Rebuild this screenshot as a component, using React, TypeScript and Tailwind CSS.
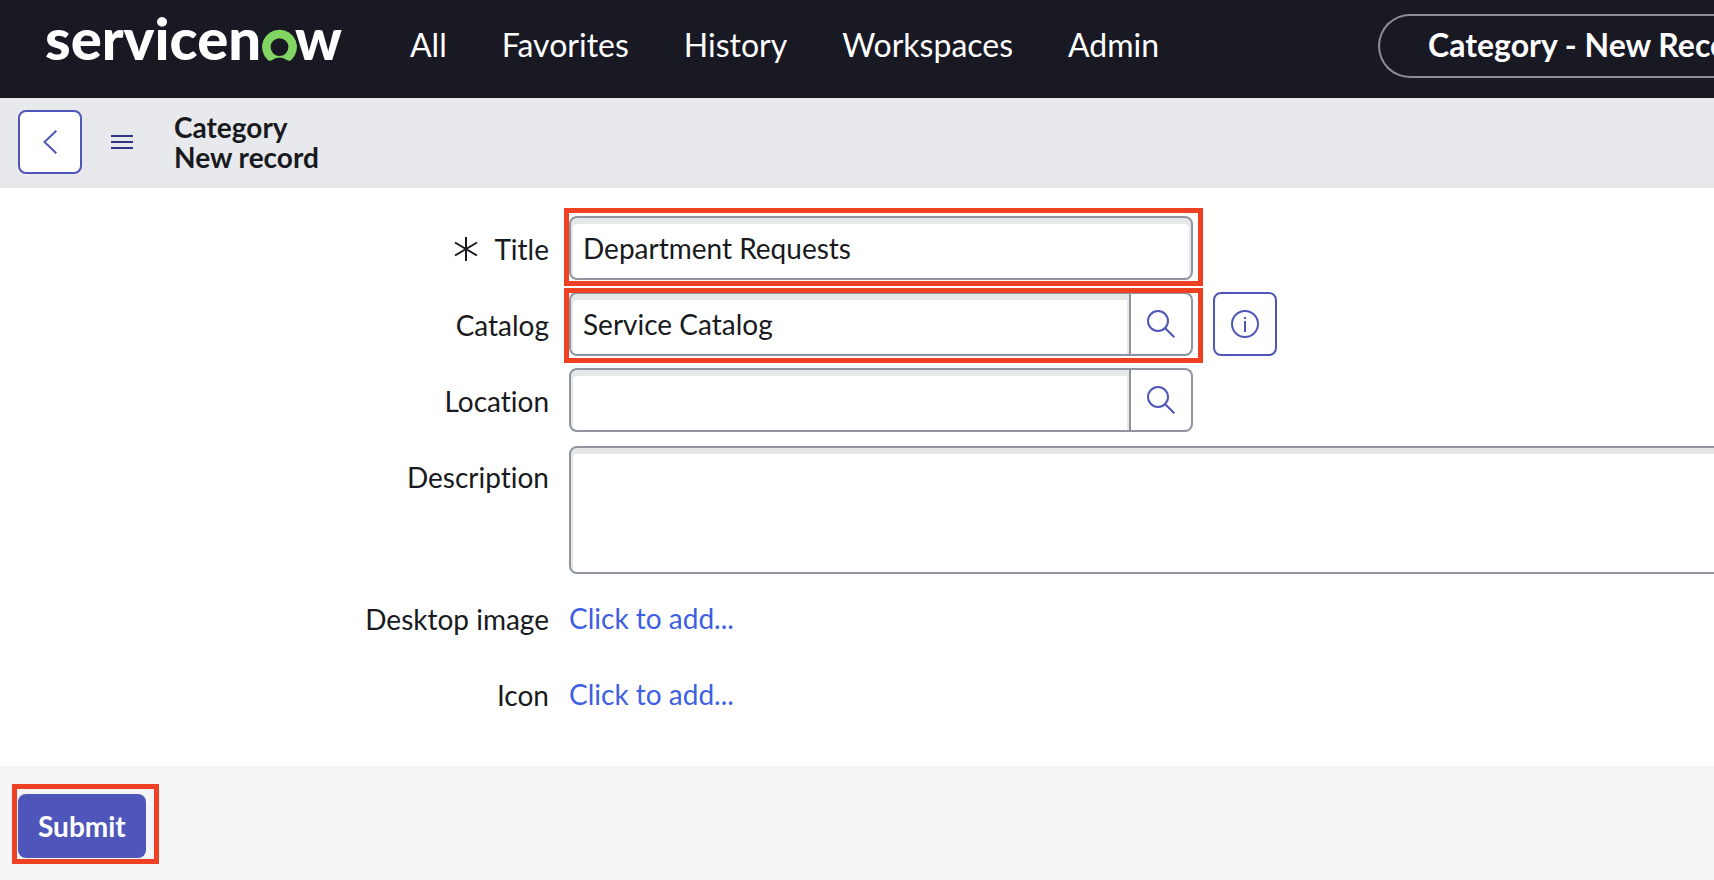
import type { ReactNode } from "react";

const NAV_ITEMS = ["All", "Favorites", "History", "Workspaces", "Admin"];

const FIELD =
  "border-2 border-[#9094a0] bg-white shadow-[inset_0_4px_0_2px_#e6e8e8] outline-none px-3 leading-10";

function Logo() {
  return (
    <a href="#" aria-label="servicenow" className="flex w-[300px] shrink-0">
      <svg viewBox="0 0 300 80" className="h-20 w-[300px]" aria-hidden="true">
        <text x="-1" y="60" fill="#fff" fontFamily="Lato, sans-serif" fontWeight="900" fontSize="58">
          servicen
        </text>
        <path
          fill="#81d663"
          d="M233.500 29.700a17.300 17.300 0 0 0-11.700 30.200c1.200 1.100 3 1.200 4.300.2a12 12 0 0 1 14.800 0c1.300 1 3.100.9 4.300-.2a17.300 17.300 0 0 0-11.700-30.200zM233.500 56a8.900 8.900 0 1 1 0-17.800 8.900 8.900 0 0 1 0 17.800z"
        />
        <text x="249" y="60" fill="#fff" fontFamily="Lato, sans-serif" fontWeight="900" fontSize="58">
          w
        </text>
      </svg>
    </a>
  );
}

function SearchIcon() {
  return (
    <svg viewBox="0 0 28 28" className="size-7" fill="none" stroke="#4f56ba" strokeWidth="2">
      <circle cx="11" cy="11" r="10" />
      <path d="M18 18l9.300 9.300" />
    </svg>
  );
}

function Highlight({ className }: { className: string }) {
  return <span aria-hidden="true" className={`pointer-events-none absolute border-[5px] border-[#ee4023] ${className}`} />;
}

function Row({ id, label, required, children }: { id: string; label: string; required?: boolean; children: ReactNode }) {
  return (
    <div className="flex gap-5">
      <label htmlFor={id} className="flex h-16 w-[549px] shrink-0 items-center justify-end gap-4 pt-[2px]">
        {required && (
          <svg viewBox="0 0 24 24" className="size-6" stroke="#181a20" strokeWidth="2" aria-hidden="true">
            <path d="M12 0v24M1 5.500l22 13M23 5.500l-22 13" />
          </svg>
        )}
        {label}
      </label>
      {children}
    </div>
  );
}

function Lookup({ id, label, value }: { id: string; label: string; value: string }) {
  return (
    <div className="flex h-16 w-[624px]">
      <input id={id} defaultValue={value} className={`${FIELD} min-w-0 flex-1 rounded-l-lg`} />
      <button
        type="button"
        aria-label={`Look up ${label}`}
        className="flex w-[62px] items-center justify-center rounded-r-lg border-2 border-l-0 border-[#9094a0] bg-white"
      >
        <SearchIcon />
      </button>
    </div>
  );
}

export default function App() {
  return (
    <div className="flex min-h-screen flex-col overflow-x-hidden bg-[#f5f5f8] font-['Lato',sans-serif] text-[28px] leading-[30px] text-[#181a20] [font-variant-ligatures:none]">
      <header className="flex h-[98px] items-start overflow-hidden bg-[#191924] pl-[46px] text-[32px] leading-10 text-white">
        <Logo />
        <nav className="mt-[13px] ml-16 flex h-16 shrink-0 items-center gap-[55px]">
          {NAV_ITEMS.map((item) => (
            <a key={item} href="#">
              {item}
            </a>
          ))}
        </nav>
        <div className="mt-[14px] ml-auto flex h-16 w-[336px] shrink-0 items-center rounded-l-full border-2 border-r-0 border-[#8e8d9b] pb-[2px] pl-12 font-bold whitespace-nowrap">
          Category - New Record
        </div>
      </header>

      <div className="flex h-[90px] items-center border-b-2 border-[#e4e4e9] bg-[#e8e9ed] pl-[18px]">
        <button
          type="button"
          aria-label="Back"
          className="flex size-16 items-center justify-center rounded-lg border-2 border-[#4f56ba] bg-white"
        >
          <svg viewBox="0 0 14 24" className="h-6 w-[14px]" fill="none" stroke="#4f56ba" strokeWidth="2">
            <path d="M13.300.7L1.500 12l11.800 11.300" />
          </svg>
        </button>
        <button type="button" aria-label="Menu" className="ml-[29px] flex w-[22px] flex-col gap-1">
          <span className="h-[2px] bg-[#2f3685]" />
          <span className="h-[2px] bg-[#2f3685]" />
          <span className="h-[2px] bg-[#2f3685]" />
        </button>
        <h1 className="ml-[41px] font-bold">
          Category
          <br />
          New record
        </h1>
      </div>

      <form className="flex flex-1 flex-col">
        <div className="flex flex-col gap-3 bg-white pt-7 pb-10">
          <Row id="title" label="Title" required>
            <div className="relative">
              <input id="title" defaultValue="Department Requests" className={`${FIELD} h-16 w-[624px] rounded-lg`} />
              <Highlight className="-top-[8px] -right-[10px] -bottom-[6px] -left-[5px]" />
            </div>
          </Row>
          <Row id="catalog" label="Catalog">
            <div className="relative">
              <Lookup id="catalog" label="catalog" value="Service Catalog" />
              <Highlight className="-top-[4px] -right-[10px] -bottom-[7px] -left-[5px]" />
            </div>
            <button
              type="button"
              aria-label="Preview catalog"
              className="flex size-16 items-center justify-center rounded-lg border-2 border-[#4f56ba] bg-white"
            >
              <svg viewBox="0 0 28 28" className="size-7" fill="none" stroke="#4f56ba" strokeWidth="2">
                <circle cx="14" cy="14" r="13" />
                <path d="M14 11v11M14 7v2" />
              </svg>
            </button>
          </Row>
          <Row id="location" label="Location">
            <Lookup id="location" label="location" value="" />
          </Row>
          <Row id="description" label="Description">
            <textarea
              id="description"
              className={`${FIELD} mt-[2px] -mr-4 h-32 min-w-0 flex-1 resize-none rounded-lg`}
            />
          </Row>
          <Row id="desktop-image" label="Desktop image">
            <button id="desktop-image" type="button" className="h-16 text-[#3e5fe3]">
              Click to add...
            </button>
          </Row>
          <Row id="icon" label="Icon">
            <button id="icon" type="button" className="h-16 text-[#3e5fe3]">
              Click to add...
            </button>
          </Row>
        </div>

        <div className="px-[18px] pt-7 pb-[22px]">
          <div className="relative w-fit">
            <button type="submit" className="h-16 rounded-lg bg-[#4f56ba] px-5 font-bold text-white">
              Submit
            </button>
            <Highlight className="-top-[10px] -right-[13px] -bottom-[6px] -left-[6px]" />
          </div>
        </div>
      </form>
    </div>
  );
}
